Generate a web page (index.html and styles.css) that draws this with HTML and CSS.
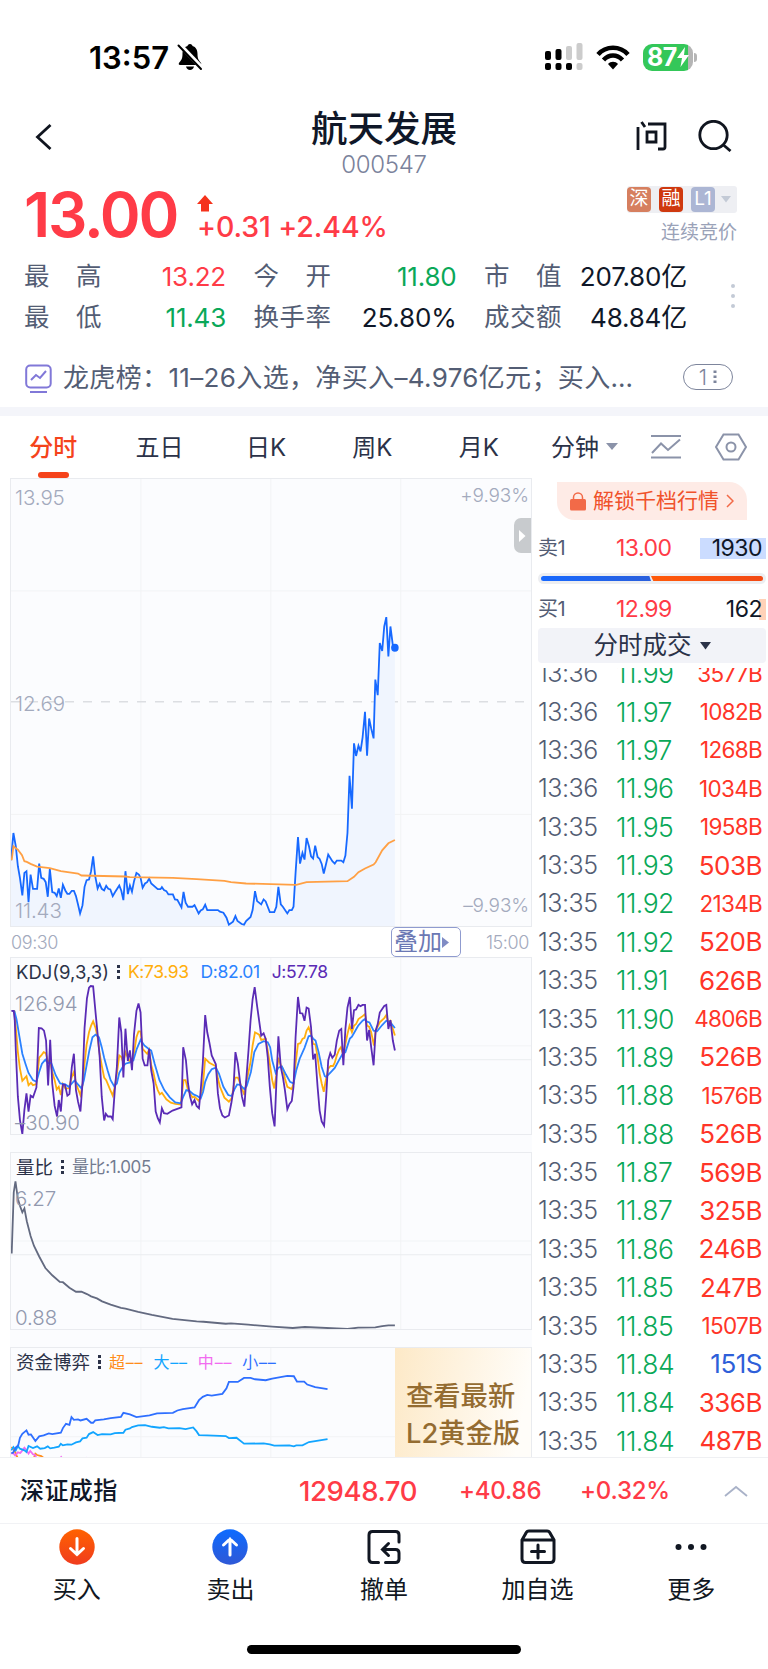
FILE: index.html
```
<!DOCTYPE html>
<html lang="zh-CN">
<head>
    <meta charset="UTF-8">
    <meta name="viewport" content="width=device-width, initial-scale=1.0">
    <title>航天发展 000547</title>
    <link rel="stylesheet" href="styles.css">
</head>
<body>

    <!-- Status bar -->
    <div class="status-bar">
        <span class="clock">13:57</span>
        <svg class="bell" width="26" height="28" viewBox="0 0 26 28">
            <path d="M13 1c1.6 0 2.3 1 2.5 2 3.500 1 5 4 5 8 0 5 1.500 6.500 3.500 9 .7 1-.1 2-1 2H3c-1 0-1.700-1-1-2 2-2.500 3.500-4 3.500-9 0-4 1.500-7 5-8 .2-1 .9-2 2.500-2z"/>
            <path d="M9 23.500h8c-.5 2-2 3.500-4 3.500s-3.500-1.500-4-3.500z"/>
            <path d="M2 1l23 24" stroke="#fff" stroke-width="4.500"/>
            <path d="M1.500 2.500l22.500 23.500" stroke="#000" stroke-width="2" stroke-linecap="round"/>
        </svg>
        <div class="status-icons">
            <svg width="38" height="28" viewBox="0 0 38 28">
                <g fill="#000">
                    <rect x="0" y="8" width="6" height="9" rx="2"/><rect x="10.500" y="6" width="6" height="11" rx="2"/>
                    <rect x="0" y="20" width="6" height="7" rx="2"/><rect x="10.500" y="20" width="6" height="7" rx="2"/><rect x="21" y="20" width="6" height="7" rx="2"/>
                </g>
                <g fill="#ccc">
                    <rect x="21" y="3" width="6" height="14" rx="2"/><rect x="31.500" y="0" width="6" height="17" rx="2"/><rect x="31.500" y="20" width="6" height="7" rx="2"/>
                </g>
            </svg>
            <svg width="34" height="25" viewBox="0 0 34 25">
                <path d="M2 9.500C10 .5 24 .5 32 9.500" fill="none" stroke="#000" stroke-width="4.500"/>
                <path d="M7.500 15c5.500-6 13.500-6 19 0" fill="none" stroke="#000" stroke-width="4.500"/>
                <path d="M17 24.500l-5-5.500c2.500-3 7.500-3 10 0z"/>
            </svg>
            <div class="battery"><span>87</span><svg width="12" height="20" viewBox="0 0 12 20"><path d="M8 0L0 11h5l-1.500 9L12 8H7z" fill="#fff"/></svg></div>
        </div>
    </div>

    <!-- Header -->
    <header>
        <svg class="back" width="18" height="28" viewBox="0 0 18 28"><path d="M15.500 2L2.500 14l13 12"/></svg>
        <div class="stock-name">
            <h1>航天发展</h1>
            <p>000547</p>
        </div>
        <div class="header-icons">
            <svg width="32" height="32" viewBox="0 0 32 32"><path d="M3 7v23M6.500 2l3.500 5M13 4h17v23q0 2-2 2h-5M12 12h9v10h-9z"/></svg>
            <svg width="36" height="32" viewBox="0 0 36 32"><circle cx="16.500" cy="15" r="13.700"/><path d="M26.500 25l7 6"/></svg>
        </div>
    </header>

    <!-- Quote -->
    <section class="quote">
        <div class="price">13.00</div>
        <div class="change">
            <svg width="16" height="18" viewBox="0 0 16 18"><path d="M8 0l8 9h-4v7.500H4V9H0z" fill="#f5321b"/></svg>
            <span>+0.31 +2.44%</span>
        </div>
        <div class="quote-side">
            <div class="badges">
                <i class="b-shen">深</i><i class="b-rong">融</i><i class="b-l1">L1</i>
                <svg width="10" height="7" viewBox="0 0 10 7"><path d="M0 0h10L5 6.500z" fill="#c3cad6"/></svg>
            </div>
            <p>连续竞价</p>
        </div>
    </section>

    <section class="stats">
        <div class="stat"><span>最</span><span>高</span><b class="up">13.22</b></div>
        <div class="stat"><span>今</span><span>开</span><b class="down">11.80</b></div>
        <div class="stat"><span>市</span><span>值</span><b>207.80亿</b></div>
        <div class="stat"><span>最</span><span>低</span><b class="down">11.43</b></div>
        <div class="stat"><span>换</span><span>手</span><span>率</span><b>25.80%</b></div>
        <div class="stat"><span>成</span><span>交</span><span>额</span><b>48.84亿</b></div>
        <svg class="more-dots" width="4" height="24" viewBox="0 0 4 24"><circle cx="2" cy="2" r="2"/><circle cx="2" cy="12" r="2"/><circle cx="2" cy="22" r="2"/></svg>
    </section>

    <section class="notice">
        <svg width="28" height="30" viewBox="0 0 28 30"><rect x="1.200" y="1.500" width="24.500" height="22" rx="4"/><path d="M6 16l5-5 4 3 6-7M5 28h17"/></svg>
        <p>龙虎榜：11–26入选，净买入–4.976亿元；买入…</p>
        <div class="count">1<svg width="4" height="16" viewBox="0 0 4 16"><path d="M2 1.500v14" stroke="#7d859c" stroke-width="3" stroke-dasharray="2.500 2.500"/></svg></div>
    </section>

    <!-- Period tabs -->
    <nav class="tabs">
        <a class="active">分时</a>
        <a>五日</a>
        <a>日K</a>
        <a>周K</a>
        <a>月K</a>
        <a class="minutes">分钟<svg width="12" height="8" viewBox="0 0 12 8"><path d="M0 0h12L6 7z" fill="#8b93a9"/></svg></a>
        <svg class="tool" width="32" height="26" viewBox="0 0 32 26"><path d="M1 2h30M1 23.500h30M2 19l9-9.500 7 6.500L30 5.500"/></svg>
        <svg class="tool" width="34" height="30" viewBox="0 0 34 30"><path d="M9.500 2.500h15L32 15l-7.500 12.500h-15L2 15z"/><circle cx="17" cy="15" r="4.500"/></svg>
    </nav>

    <main>
        <div class="charts">
            <!-- Intraday price -->
            <div class="chart price-chart">
                <svg viewBox="30 -666 1513 1346" preserveAspectRatio="none">
                    <path class="grid" d="M408-666V680M786-666V680M1164-666V680M30-329H1543M30 344H1543"/>
                    <path class="dash" d="M30 5H1543"/>
                    <path class="area" d="M30 680V482L37 400 44 440 50 500 56 535 63 588 69 520 75 515 81 608 87 525 94 568 106 568 112 492 118 535 131 548 137 592 143 508 150 578 163 590 181 556 194 583 213 574 231 642 244 562 257 540 269 470 282 567 307 559 326 590 345 558 357 602 363 515 370 584 395 520 413 565 432 537 457 569 501 585 526 624 532 577 545 622 576 642 595 616 601 632 648 640 664 676 683 650 708 676 727 653 740 575 758 615 783 638 796 638 808 562 815 615 834 642 852 622 865 412 871 492 890 415 909 477 915 438 940 522 953 465 972 492 997 488 1009 400 1015 228 1022 327 1028 130 1047 154 1060 35 1066 167 1072 55 1085 115 1090-62 1097-15 1103-172 1110-148 1122-250 1128-132 1134-222 1147-158V680z"/>
                    <polyline stroke="#1769ff" points="30,482 37,400 44,440 50,500 56,535 63,588 69,520 75,515 81,608 87,525 94,568 106,568 112,492 118,535 125,538 131,548 137,592 143,508 150,578 157,580 163,590 169,567 175,595 181,556 188,573 194,583 200,583 207,574 213,574 219,590 225,615 231,642 238,618 244,562 250,542 257,540 263,515 269,470 275,530 282,567 288,553 294,568 301,573 307,559 313,568 319,570 326,590 332,579 345,558 351,574 357,602 363,515 370,584 376,558 382,577 388,545 395,520 402,525 407,535 413,565 420,552 426,548 432,537 438,552 457,569 465,569 469,563 475,572 482,575 488,585 501,585 507,600 514,601 526,624 532,577 538,610 545,622 558,622 564,617 576,642 582,633 588,630 595,616 601,632 632,632 638,637 648,640 657,655 664,676 676,667 683,650 689,665 701,674 708,676 714,665 727,653 733,632 740,575 746,605 758,615 765,600 771,606 783,638 796,638 802,622 808,562 815,615 821,622 834,642 840,632 847,632 852,622 858,520 865,412 871,492 878,460 884,480 890,415 897,440 903,470 909,477 915,438 922,472 928,478 934,493 940,522 947,492 953,465 965,485 972,492 978,483 991,483 997,488 1003,468 1009,400 1015,228 1022,327 1028,130 1034,168 1041,137 1047,154 1053,112 1060,35 1066,167 1072,55 1078,85 1085,115 1090,-62 1097,-15 1103,-172 1110,-148 1116,-222 1122,-250 1128,-132 1134,-222 1141,-165 1147,-158"/>
                    <polyline stroke="#ffa044" points="32,482 37,440 44,446 50,450 62,467 69,485 76,487 87,493 106,501 143,506 175,515 225,522 235,528 363,531 376,533 501,535 570,539 651,544 670,548 714,552 860,556 890,548 1009,545 1028,532 1041,518 1060,507 1085,495 1091,488 1110,452 1128,431 1147,421"/>
                    <ellipse cx="1147" cy="-158" rx="11" ry="12" fill="#1769ff"/>
                </svg>
                <span class="lbl max">13.95</span>
                <span class="lbl mid">12.69</span>
                <span class="lbl min">11.43</span>
                <span class="lbl pct-max">+9.93%</span>
                <span class="lbl pct-min">–9.93%</span>
                <div class="collapse"><svg width="7" height="12" viewBox="0 0 7 12"><path d="M0 0l6.500 6L0 12z" fill="#fff"/></svg></div>
            </div>
            <div class="time-axis">
                <span>09:30</span>
                <button class="overlay">叠加<svg width="7" height="11" viewBox="0 0 7 11"><path d="M0 0l7 5.500L0 11z" fill="#7f8bc4"/></svg></button>
                <span>15:00</span>
            </div>

            <!-- KDJ -->
            <div class="chart sub-chart">
                <svg viewBox="30 50 1513 533" preserveAspectRatio="none">
                    <path class="grid" d="M408 50V583M786 50V583M1164 50V583M30 316H1543"/>
                    <path class="grid strong" d="M30 358H1543"/>
                    <polyline stroke="#ffae0d" points="34,210 40,212 44,260 50,335 56,385 63,422 75,408 81,435 88,428 94,435 104,432 112,352 118,345 125,335 131,338 138,365 144,360 150,395 157,420 163,448 169,440 175,465 181,432 188,445 198,445 207,410 213,395 219,430 232,465 238,435 244,370 250,312 257,275 263,255 269,242 276,262 282,290 288,340 294,375 301,412 307,420 319,450 326,467 332,440 338,400 345,345 351,350 357,368 363,335 376,365 386,350 395,290 401,272 407,272 413,325 426,340 432,328 438,375 444,395 451,430 457,450 463,463 469,458 482,478 495,488 508,492 524,494 532,420 538,420 545,450 558,472 564,470 576,482 582,470 588,440 595,355 607,367 626,378 632,415 638,440 651,473 664,485 672,475 682,412 690,412 697,430 709,465 714,430 727,365 733,315 740,275 752,282 758,298 771,295 777,330 783,370 790,420 796,445 802,405 808,352 815,375 821,385 827,415 834,440 847,447 852,430 858,370 865,310 872,308 878,295 884,292 890,270 896,260 903,280 909,310 916,312 922,350 928,400 934,430 940,455 947,415 953,385 960,377 967,377 972,367 978,345 985,327 990,320 997,345 1003,310 1009,280 1015,255 1022,275 1028,255 1034,250 1041,235 1053,226 1060,220 1066,255 1072,258 1078,275 1086,315 1091,270 1103,245 1116,232 1122,223 1128,245 1134,240 1147,285"/>
                    <polyline stroke="#2b82ff" points="34,210 40,212 46,235 54,285 63,340 72,370 81,398 94,420 104,425 112,395 120,370 130,358 138,368 147,368 160,405 173,430 188,433 198,440 207,430 215,421 224,432 235,445 242,420 250,375 258,330 267,290 276,282 286,290 294,320 301,352 311,390 320,420 330,438 338,430 345,398 355,380 363,370 376,366 386,360 396,325 407,298 418,315 430,325 438,330 448,370 462,420 476,450 492,472 508,487 524,490 532,468 540,450 550,453 561,463 572,468 582,475 589,455 595,425 604,402 614,387 626,382 635,400 648,440 662,465 672,468 680,448 688,433 696,434 709,447 716,437 728,395 738,335 750,310 765,302 777,305 784,320 790,360 800,398 808,382 818,378 830,403 842,425 852,430 860,390 870,355 884,322 896,287 903,285 909,294 916,300 925,335 934,380 943,408 947,410 960,396 972,383 984,360 994,342 1003,335 1016,294 1022,288 1040,255 1053,240 1060,235 1066,243 1073,245 1085,270 1095,272 1110,253 1122,240 1134,245 1147,262"/>
                    <polyline stroke="#5a2bb5" points="31,210 38,210 41,240 44,330 50,470 56,540 63,583 69,510 75,460 81,515 87,467 94,472 104,442 111,262 119,263 126,270 132,300 138,436 144,298 150,430 157,498 164,530 169,480 175,515 181,433 187,434 194,467 200,462 207,380 213,340 219,450 225,485 232,515 238,430 244,262 251,172 257,140 262,135 269,136 276,215 282,280 288,350 294,470 301,542 306,522 312,530 321,530 326,538 332,450 338,380 345,230 351,275 357,412 363,264 370,362 376,330 382,390 388,280 395,210 401,188 407,215 413,355 419,375 427,375 432,325 438,390 445,430 451,515 457,535 463,548 469,505 475,520 485,522 500,512 526,502 531,320 539,360 545,430 551,470 557,493 564,480 570,498 577,505 582,450 588,370 595,223 601,275 607,305 614,345 626,372 632,460 638,505 645,527 652,533 664,527 671,490 677,450 683,335 690,370 697,430 702,470 709,500 714,425 721,330 727,240 733,175 739,138 746,195 758,285 765,278 771,295 777,350 783,440 790,520 797,560 802,430 808,287 815,380 821,410 827,450 834,508 840,493 847,483 852,440 858,290 865,168 871,217 878,218 884,240 890,200 896,203 903,260 909,357 915,340 922,440 928,512 934,545 941,558 947,470 953,360 959,338 965,352 972,343 978,300 985,270 991,265 997,375 1003,265 1009,200 1016,168 1022,265 1028,208 1034,206 1041,192 1047,196 1053,192 1060,192 1066,300 1072,268 1078,320 1085,375 1091,270 1097,250 1103,215 1116,195 1122,192 1128,265 1134,238 1141,300 1147,330"/>
                </svg>
                <div class="legend"><b>KDJ(9,3,3)</b><i class="dots"></i><span class="k">K:73.93</span><span class="d">D:82.01</span><span class="j">J:57.78</span></div>
                <span class="lbl max">126.94</span>
                <span class="lbl min">–30.90</span>
            </div>

            <!-- Volume ratio -->
            <div class="chart sub-chart">
                <svg viewBox="30 36 1513 534" preserveAspectRatio="none">
                    <path class="grid" d="M408 36V570M786 36V570M1164 36V570M30 303H1543"/>
                    <path class="grid strong" d="M30 345H1543"/>
                    <polyline stroke="#636a80" points="32,341 38,155 43,122 50,175 56,196 63,216 69,204 76,243 87,288 97,318 112,350 130,385 150,407 172,427 181,428 200,445 219,457 235,457 251,464 263,471 280,477 295,486 320,496 350,506 363,508 400,518 440,527 500,539 570,547 590,548 655,554 670,553 720,557 790,563 850,567 885,564 1009,570 1040,566 1090,565 1110,561 1128,559 1147,559"/>
                </svg>
                <div class="legend"><b>量比</b><i class="dots"></i><span class="ratio">量比:1.005</span></div>
                <span class="lbl max">6.27</span>
                <span class="lbl min">0.88</span>
            </div>

            <!-- Fund flow -->
            <div class="chart fund-chart">
                <svg viewBox="30 52 1513 331" preserveAspectRatio="none">
                    <path class="grid" d="M408 52V383M786 52V383M30 319H1543"/>
                    <polyline stroke="#ff8c1a" points="31,350 36,355 42,365 48,380 55,390 95,388 101,370 106,374 118,377 124,382 130,390"/>
                    <polyline stroke="#f26bf0" points="31,370 36,368 42,375 50,366 57,368 63,360 69,352 75,360 81,370 86,362 94,372 100,374 106,390 170,390 176,380 183,390 235,388 252,382"/>
                    <polyline stroke="#12a5ff" points="31,360 37,350 44,360 50,347 56,355 69,360 75,365 81,347 94,353 106,348 115,355 128,353 137,348 144,354 156,352 169,349 175,340 181,345 194,342 206,343 219,336 231,333 238,324 250,322 257,311 269,305 282,314 295,311 320,312 332,308 357,307 363,298 376,294 382,290 400,285 420,284 440,289 463,292 475,290 488,294 520,293 538,296 560,291 570,303 577,314 600,315 655,317 664,323 686,322 708,340 765,339 783,342 796,346 840,345 853,348 860,345 878,345 897,335 951,326"/>
                    <polyline stroke="#2e6fff" points="31,368 36,367 45,350 51,345 56,322 63,310 75,300 81,313 88,312 101,332 112,318 125,315 140,309 150,311 175,307 181,293 190,280 200,283 206,260 213,268 225,267 232,270 250,265 263,277 269,277 275,270 300,267 320,263 350,259 357,247 376,252 395,260 433,255 455,249 501,247 514,240 530,236 564,231 577,209 588,199 601,193 614,195 645,190 657,173 664,154 690,154 708,142 727,142 740,146 771,149 790,144 834,136 853,137 862,153 883,153 892,162 915,170 951,176"/>
                </svg>
                <div class="legend fund-legend"><b>资金博弈</b><i class="dots"></i><span class="super">超––</span><span class="large">大––</span><span class="medium">中––</span><span class="small">小––</span></div>
                <div class="gold">查看最新<br>L2黄金版</div>
            </div>
        </div>

        <!-- Order book and ticks -->
        <aside>
            <div class="unlock">
                <svg width="16" height="19" viewBox="0 0 16 19"><rect y="7" width="16" height="11.500" rx="1.500" fill="#f26a48"/><path d="M3.500 8V5.500a4.500 4.500 0 0 1 9 0V8" fill="none" stroke="#f26a48" stroke-width="1.500"/></svg>
                <span>解锁千档行情</span>
                <svg width="8" height="14" viewBox="0 0 8 14"><path d="M1 1l6 6-6 6" fill="none" stroke="#f26a48" stroke-width="1.500"/></svg>
            </div>
            <div class="order"><span>卖1</span><b>13.00</b><em class="sell">1930</em></div>
            <div class="ratio-bar"><i></i><i></i></div>
            <div class="order"><span>买1</span><b>12.99</b><em class="buy">162</em></div>
            <div class="ticks-head">分时成交<svg width="11" height="8" viewBox="0 0 11 8"><path d="M0 0h11L5.500 7.500z" fill="#2b3248"/></svg></div>
            <div class="ticks" id="ticks"></div>
        </aside>
    </main>

    <div class="index-bar">
        <b>深证成指</b>
        <span class="idx">12948.70</span>
        <span class="diff">+40.86</span>
        <span class="rate">+0.32%</span>
        <svg width="24" height="12" viewBox="0 0 24 12"><path d="M1 11L12 2l11 9" fill="none" stroke="#a9b2c8" stroke-width="1.800"/></svg>
    </div>

    <footer>
        <a><svg width="36" height="36" viewBox="0 0 36 36"><defs><linearGradient id="buy" x2="0" y2="1"><stop stop-color="#ff6200"/><stop offset="1" stop-color="#f03c1e"/></linearGradient></defs><circle class="disc" cx="18" cy="18" r="17.700" fill="url(#buy)"/><path d="M18 9.500v16M11.500 19.500l6.500 6 6.500-6" stroke="#fff"/></svg>买入</a>
        <a><svg width="36" height="36" viewBox="0 0 36 36"><defs><linearGradient id="sell" x2="0" y2="1"><stop stop-color="#0d6bff"/><stop offset="1" stop-color="#2f58d6"/></linearGradient></defs><circle class="disc" cx="18" cy="18" r="17.700" fill="url(#sell)"/><path d="M18 26V10M11.500 16l6.500-6 6.500 6" stroke="#fff"/></svg>卖出</a>
        <a><svg width="36" height="36" viewBox="0 0 36 36"><path d="M12.500 33.500H6.500q-3.500 0-3.500-3.500V6q0-3.500 3.500-3.500h23Q33 2.500 33 6v7M19.500 33.500h10q3.500 0 3.500-3.500v-6q0-3.500-3.500-3.500H17M22.500 14.500l-6 6 6 6"/></svg>撤单</a>
        <a><svg width="36" height="36" viewBox="0 0 36 36"><path d="M2 11L6 4q.8-2 3-2h18q2.200 0 3 2l4 7v19q0 3.500-3.500 3.500h-25Q2 33.500 2 30zM2 11h32M18 16v13M11.500 22.500h13"/></svg>加自选</a>
        <a><svg width="36" height="36" viewBox="0 0 36 36"><g fill="#111722"><circle cx="5.500" cy="18" r="3"/><circle cx="18" cy="18" r="3"/><circle cx="30.500" cy="18" r="3"/></g></svg>更多</a>
    </footer>
    <div class="home-indicator"></div>

    <script>
        const ticks = [
            ['13:36', '11.99', '3577B'],
            ['13:36', '11.97', '1082B'],
            ['13:36', '11.97', '1268B'],
            ['13:36', '11.96', '1034B'],
            ['13:35', '11.95', '1958B'],
            ['13:35', '11.93', '503B'],
            ['13:35', '11.92', '2134B'],
            ['13:35', '11.92', '520B'],
            ['13:35', '11.91', '626B'],
            ['13:35', '11.90', '4806B'],
            ['13:35', '11.89', '526B'],
            ['13:35', '11.88', '1576B'],
            ['13:35', '11.88', '526B'],
            ['13:35', '11.87', '569B'],
            ['13:35', '11.87', '325B'],
            ['13:35', '11.86', '246B'],
            ['13:35', '11.85', '247B'],
            ['13:35', '11.85', '1507B'],
            ['13:35', '11.84', '151S'],
            ['13:35', '11.84', '336B'],
            ['13:35', '11.84', '487B']
        ];

        document.getElementById('ticks').innerHTML = ticks.map(([time, price, vol]) => {
            let cls = vol.endsWith('S') ? 'vol s' : 'vol';
            // long volumes are set smaller so they fit
            if (vol.length > 4) cls += ' long';
            return `<div class="tick"><span>${time}</span><b>${price}</b><em class="${cls}">${vol}</em></div>`;
        }).join('');
    </script>

</body>
</html>
```
FILE: styles.css
```
* {
    box-sizing: border-box;
}
body {
    font-family: Inter, "Noto Sans CJK SC", sans-serif;
    margin: 0;
    width: 768px;
    height: 1669px;
    overflow: hidden;
    display: flex;
    flex-direction: column;
    background: #fff;
    color: #0f1728;
}
h1, p {
    margin: 0;
}
b, i, em {
    font-weight: normal;
    font-style: normal;
}
svg {
    display: block;
    flex: none;
}

/* Status bar */
.status-bar {
    height: 100px;
    padding: 14px 70px 0 89px;
    display: flex;
    align-items: center;
    color: #000;
}
.clock {
    font-size: 31px;
    font-weight: 600;
    letter-spacing: 0;
    width: 88px;
}
.status-icons {
    margin-left: auto;
    display: flex;
    align-items: center;
    gap: 13px;
}
.battery {
    position: relative;
    width: 50px;
    height: 27px;
    border-radius: 9px;
    background: linear-gradient(90deg, #34c759 90%, #b5b5b5 90%);
    display: flex;
    align-items: center;
    justify-content: center;
    color: #fff;
    font-size: 25px;
    font-weight: 700;
    letter-spacing: -0.5px;
    margin-right: 5px;
}
.battery::after {
    content: "";
    position: absolute;
    right: -4px;
    top: 9px;
    width: 3px;
    height: 9px;
    border-radius: 0 3px 3px 0;
    background: #b5b5b5;
}

/* Header */
header {
    height: 84px;
    padding: 0 35px 0 35px;
    display: grid;
    grid-template-columns: 1fr 200px 1fr;
}
header svg {
    fill: none;
    stroke: #10151f;
    stroke-width: 2.8;
}
.back {
    margin-top: 23px;
}
.stock-name {
    text-align: center;
    padding-top: 9px;
}
.stock-name h1 {
    font-size: 36.5px;
    line-height: 40px;
    font-weight: 500;
    white-space: nowrap;
}
.stock-name p {
    font-size: 24px;
    line-height: 32px;
    font-weight: 300;
    color: #7a829b;
    letter-spacing: -0.3px;
}
.header-icons {
    display: flex;
    gap: 30px;
    justify-content: flex-end;
    padding-top: 20px;
}

/* Quote */
.quote {
    height: 73px;
    padding: 0 31px 0 24px;
    display: flex;
    color: #ff3b47;
}
.price {
    width: 173px;
    font-size: 62px;
    line-height: 62px;
    font-weight: 600;
    letter-spacing: -2.2px;
}
.change {
    padding-top: 11px;
    font-size: 28.5px;
    line-height: 28px;
    font-weight: 500;
    letter-spacing: -0.1px;
}
.quote-side {
    margin-left: auto;
    text-align: right;
    font-size: 19px;
    line-height: 40px;
    color: #9aa2b8;
}
.badges {
    display: flex;
    align-items: center;
    gap: 8px;
    width: 110px;
    height: 27px;
    margin-top: 2px;
    background: #eeeff3;
    border-radius: 3px;
}
.badges i {
    width: 24px;
    height: 25px;
    border-radius: 4px;
    color: #fff;
    font-size: 19px;
    line-height: 24px;
    text-align: center;
}
.badges .b-shen {
    background: #d67f5f;
}
.badges .b-rong {
    background: #cf390f;
}
.badges .b-l1 {
    background: #acb6d4;
}
.badges svg {
    margin-left: -2px;
}

/* Key figures */
.stats {
    position: relative;
    display: grid;
    grid-template-columns: 202px 203px 203px;
    column-gap: 27.5px;
    grid-auto-rows: 41px;
    padding-left: 24px;
    height: 83px;
}
.stat {
    display: flex;
    align-items: center;
    color: #535d74;
    font-size: 25.500px;
    line-height: 36px;
    white-space: nowrap;
}
.stat span {
    width: 26px;
    margin-top: -4px;
}
.stat span:first-child:nth-last-child(3) {
    margin-right: 26px;
}
.stat b {
    margin-left: auto;
    margin-top: -2px;
    color: #0f1728;
    font-size: 26px;
    letter-spacing: -0.2px;
}
.stat .up {
    color: #ff3b47;
}
.stat .down {
    color: #0aa858;
}
.more-dots {
    position: absolute;
    left: 731px;
    top: 27px;
    fill: #c3cad6;
}

/* Notice */
.notice {
    height: 67px;
    padding: 7px 35px 0 25px;
    display: flex;
    align-items: center;
    font-size: 26px;
    color: #535d74;
}
.notice > svg {
    fill: none;
    stroke: #8178d8;
    stroke-width: 2;
    margin-top: 3px;
}
.notice p {
    margin: -4px 0 0 10px;
    width: 600px;
    white-space: nowrap;
    letter-spacing: 0.35px;
}
.count {
    margin-left: auto;
    width: 50px;
    height: 26px;
    border: 1.5px solid #7d859c;
    border-radius: 13px;
    display: flex;
    align-items: center;
    justify-content: center;
    gap: 6px;
    font-size: 21px;
    font-weight: 300;
    color: #7d859c;
}

/* Tabs */
.tabs {
    height: 71px;
    border-top: 9px solid #f4f5fa;
    display: flex;
    align-items: center;
}
.tabs a {
    position: relative;
    flex: none;
    width: 106.4px;
    height: 62px;
    line-height: 63px;
    text-align: center;
    font-size: 24px;
    color: #2b3248;
}
.tabs .active {
    color: #f5431b;
    font-weight: 500;
}
.tabs .active::after {
    content: "";
    position: absolute;
    left: 38px;
    bottom: 0;
    width: 31px;
    height: 6px;
    border-radius: 3px;
    background: #f5431b;
}
.tabs .minutes {
    display: flex;
    align-items: center;
    gap: 7px;
    margin-left: 19px;
    width: 99px;
}
.tool {
    fill: none;
    stroke: #8b93a9;
    stroke-width: 2;
    margin-right: 32px;
}

/* Charts */
main {
    height: 979px;
    display: flex;
    padding-left: 10px;
}
.charts {
    width: 522px;
    height: 979px;
    overflow: hidden;
}
.chart {
    position: relative;
    border: 1px solid #e9ebef;
    background: #fbfcfe;
}
.chart > svg {
    width: 100%;
    height: 100%;
}
.chart polyline {
    fill: none;
    stroke-width: 1.8;
    vector-effect: non-scaling-stroke;
}
.grid {
    fill: none;
    stroke: #f2f3f5;
    vector-effect: non-scaling-stroke;
}
.strong {
    stroke: #eaecef;
}
.dash {
    stroke: #dcdee2;
    stroke-width: 1.5;
    stroke-dasharray: 9 9;
    vector-effect: non-scaling-stroke;
}
.area {
    fill: #f0f5fe;
}
.price-chart {
    height: 449px;
}
.sub-chart {
    height: 178px;
    margin-bottom: 17px;
    box-shadow: 0 17px 0 #fbfcfe;
}
.fund-chart {
    height: 178px;
}
.lbl {
    position: absolute;
    left: 4px;
    font-size: 20.5px;
    line-height: 24px;
    font-weight: 300;
    color: #9299ae;
    letter-spacing: -0.1px;
}
.price-chart .lbl {
    color: #a3aabd;
}
.lbl.max {
    top: 7px;
}
.sub-chart .max {
    top: 34px;
}
.lbl.mid {
    top: 213px;
}
.lbl.min {
    bottom: 3px;
}
.sub-chart .lbl.min {
    bottom: -1px;
}
.lbl.pct-max, .lbl.pct-min {
    left: auto;
    right: 2px;
    font-size: 19px;
}
.lbl.pct-max {
    top: 5px;
}
.lbl.pct-min {
    bottom: 8px;
}
.collapse {
    position: absolute;
    right: 0;
    top: 39px;
    width: 17px;
    height: 35px;
    border-radius: 7px 0 0 7px;
    background: #c8cbce;
    display: flex;
    align-items: center;
    justify-content: center;
}
.time-axis {
    height: 30px;
    display: flex;
    align-items: center;
    font-size: 18px;
    font-weight: 300;
    color: #a3aabd;
    letter-spacing: -0.4px;
    padding: 0 3px 0 1px;
}
.overlay {
    font-family: inherit;
    margin-left: auto;
    margin-right: 25px;
    width: 70px;
    height: 30px;
    padding: 0 0 0 2px;
    display: flex;
    align-items: center;
    border: 1.5px solid #8f9bcf;
    border-radius: 5px;
    background: #fff;
    color: #6b78b4;
    font-size: 24px;
    line-height: 26px;
}
.legend {
    position: absolute;
    left: 5px;
    top: 2px;
    display: flex;
    align-items: center;
    font-size: 17.5px;
    line-height: 24px;
    white-space: nowrap;
}
.legend b {
    font-size: 18.5px;
    color: #2b3248;
}
.legend span {
    margin-right: 12px;
    letter-spacing: -0.4px;
}
.fund-legend span {
    font-size: 16px;
    margin-right: 10px;
    letter-spacing: 0.8px;
}
.dots {
    width: 3px;
    height: 14px;
    margin: 0 8px;
    background: repeating-linear-gradient(#2b3248 0 3px, transparent 3px 5.5px);
}
.k {
    color: #ffae0d;
}
.d {
    color: #2b82ff;
}
.j {
    color: #5a2bb5;
}
.legend .ratio {
    color: #737b90;
    font-size: 17px;
}
.super {
    color: #ff8c1a;
}
.large {
    color: #12a5ff;
}
.medium {
    color: #f26bf0;
}
.small {
    color: #2e6fff;
}
.fund-chart > svg {
    height: 110px;
}
.gold {
    position: absolute;
    right: 0;
    top: 0;
    width: 136px;
    height: 110px;
    padding: 30px 0 0 11px;
    background: linear-gradient(100deg, #fde9c7, #fffdf9 90%);
    color: #946c31;
    font-size: 27.3px;
    line-height: 37px;
    font-weight: 500;
    white-space: nowrap;
}

/* Right column */
aside {
    width: 228px;
    height: 979px;
    margin-left: 6px;
    overflow: hidden;
}
.unlock {
    width: 190px;
    height: 38px;
    margin: 4px 0 0 19px;
    border-radius: 0 18px 0 18px;
    background: #feebe6;
    color: #f0522b;
    display: flex;
    align-items: center;
    justify-content: center;
    gap: 7px;
    font-size: 21px;
    line-height: 36px;
}
.order {
    height: 21px;
    margin-top: 18px;
    display: grid;
    grid-template-columns: 78px 1fr 66px;
    align-items: center;
    font-size: 23px;
    line-height: 21px;
    letter-spacing: -0.5px;
}
.order span {
    font-size: 20px;
    color: #535d74;
}
.order b {
    color: #ff3b47;
}
.order em {
    text-align: right;
    padding-right: 4px;
}
.sell {
    background: #cbdcff;
}
.buy {
    background: linear-gradient(#ffd2b8, #ffd2b8) right / 7px 100% no-repeat;
}
.ratio-bar {
    display: flex;
    height: 11px;
    margin-top: 14px;
    padding: 3px;
    border-radius: 6px;
    background: #edeef1;
}
.ratio-bar i {
    height: 5px;
    border-radius: 3px 0 0 3px;
    background: linear-gradient(90deg, #1769ff, #2a5fdc);
    width: 110px;
    clip-path: polygon(0 0, 98.500% 0, 100% 100%, 0 100%);
}
.ratio-bar i + i {
    background: linear-gradient(90deg, #ff5a0a, #f24a15);
    border-radius: 0 3px 3px 0;
    width: 112px;
    clip-path: polygon(0 0, 100% 0, 100% 100%, 2% 100%);
}
.ratio-bar + .order {
    margin-top: 15px;
}
.ticks-head {
    height: 35px;
    margin-top: 8px;
    border-radius: 4px;
    background: #f2f3f8;
    display: flex;
    align-items: center;
    justify-content: center;
    gap: 8px;
    font-size: 24.500px;
    line-height: 35px;
    color: #2b3248;
}
.ticks {
    height: 790px;
    margin-top: 5px;
    overflow: hidden;
    display: flex;
    flex-direction: column;
}
.tick {
    flex: none;
    height: 38.39px;
    display: grid;
    grid-template-columns: 78px 1fr 80px;
    align-items: center;
    font-size: 25px;
    font-weight: 300;
    color: #535d74;
    letter-spacing: -0.5px;
}
.tick:first-child {
    margin-top: -14px;
}
.tick b {
    color: #0aa858;
    font-size: 26.5px;
    font-weight: 300;
}
.vol {
    text-align: right;
    padding-right: 4px;
    font-size: 26px;
    color: #ff3528;
}
.vol.long {
    font-size: 22.5px;
    letter-spacing: -0.7px;
}
.vol.s {
    color: #2e5fd9;
}

/* Index bar */
.index-bar {
    height: 67px;
    border-top: 1px solid #eff0f3;
    border-bottom: 1px solid #f1f2f5;
    display: grid;
    grid-template-columns: 279px 160px 121px 144px 24px;
    align-items: center;
    padding-left: 20px;
    font-size: 24px;
    line-height: 36px;
    font-weight: 500;
    color: #ff3b47;
    letter-spacing: -0.2px;
}
.index-bar b {
    color: #0f1728;
    font-weight: 500;
    letter-spacing: 0.4px;
}
.index-bar .idx {
    font-size: 27.5px;
    letter-spacing: -0.4px;
}

/* Bottom actions */
footer {
    height: 121px;
    display: grid;
    grid-template-columns: repeat(5, 1fr);
}
footer a {
    display: flex;
    flex-direction: column;
    align-items: center;
    gap: 7px;
    padding-top: 5px;
    font-size: 24px;
    line-height: 36px;
    color: #111722;
}
footer svg {
    fill: none;
    stroke: #111722;
    stroke-width: 3;
    stroke-linecap: round;
}
footer g, footer .disc {
    stroke: none;
}
.home-indicator {
    width: 274px;
    height: 9px;
    margin: 0 auto;
    border-radius: 5px;
    background: #000;
}
```
